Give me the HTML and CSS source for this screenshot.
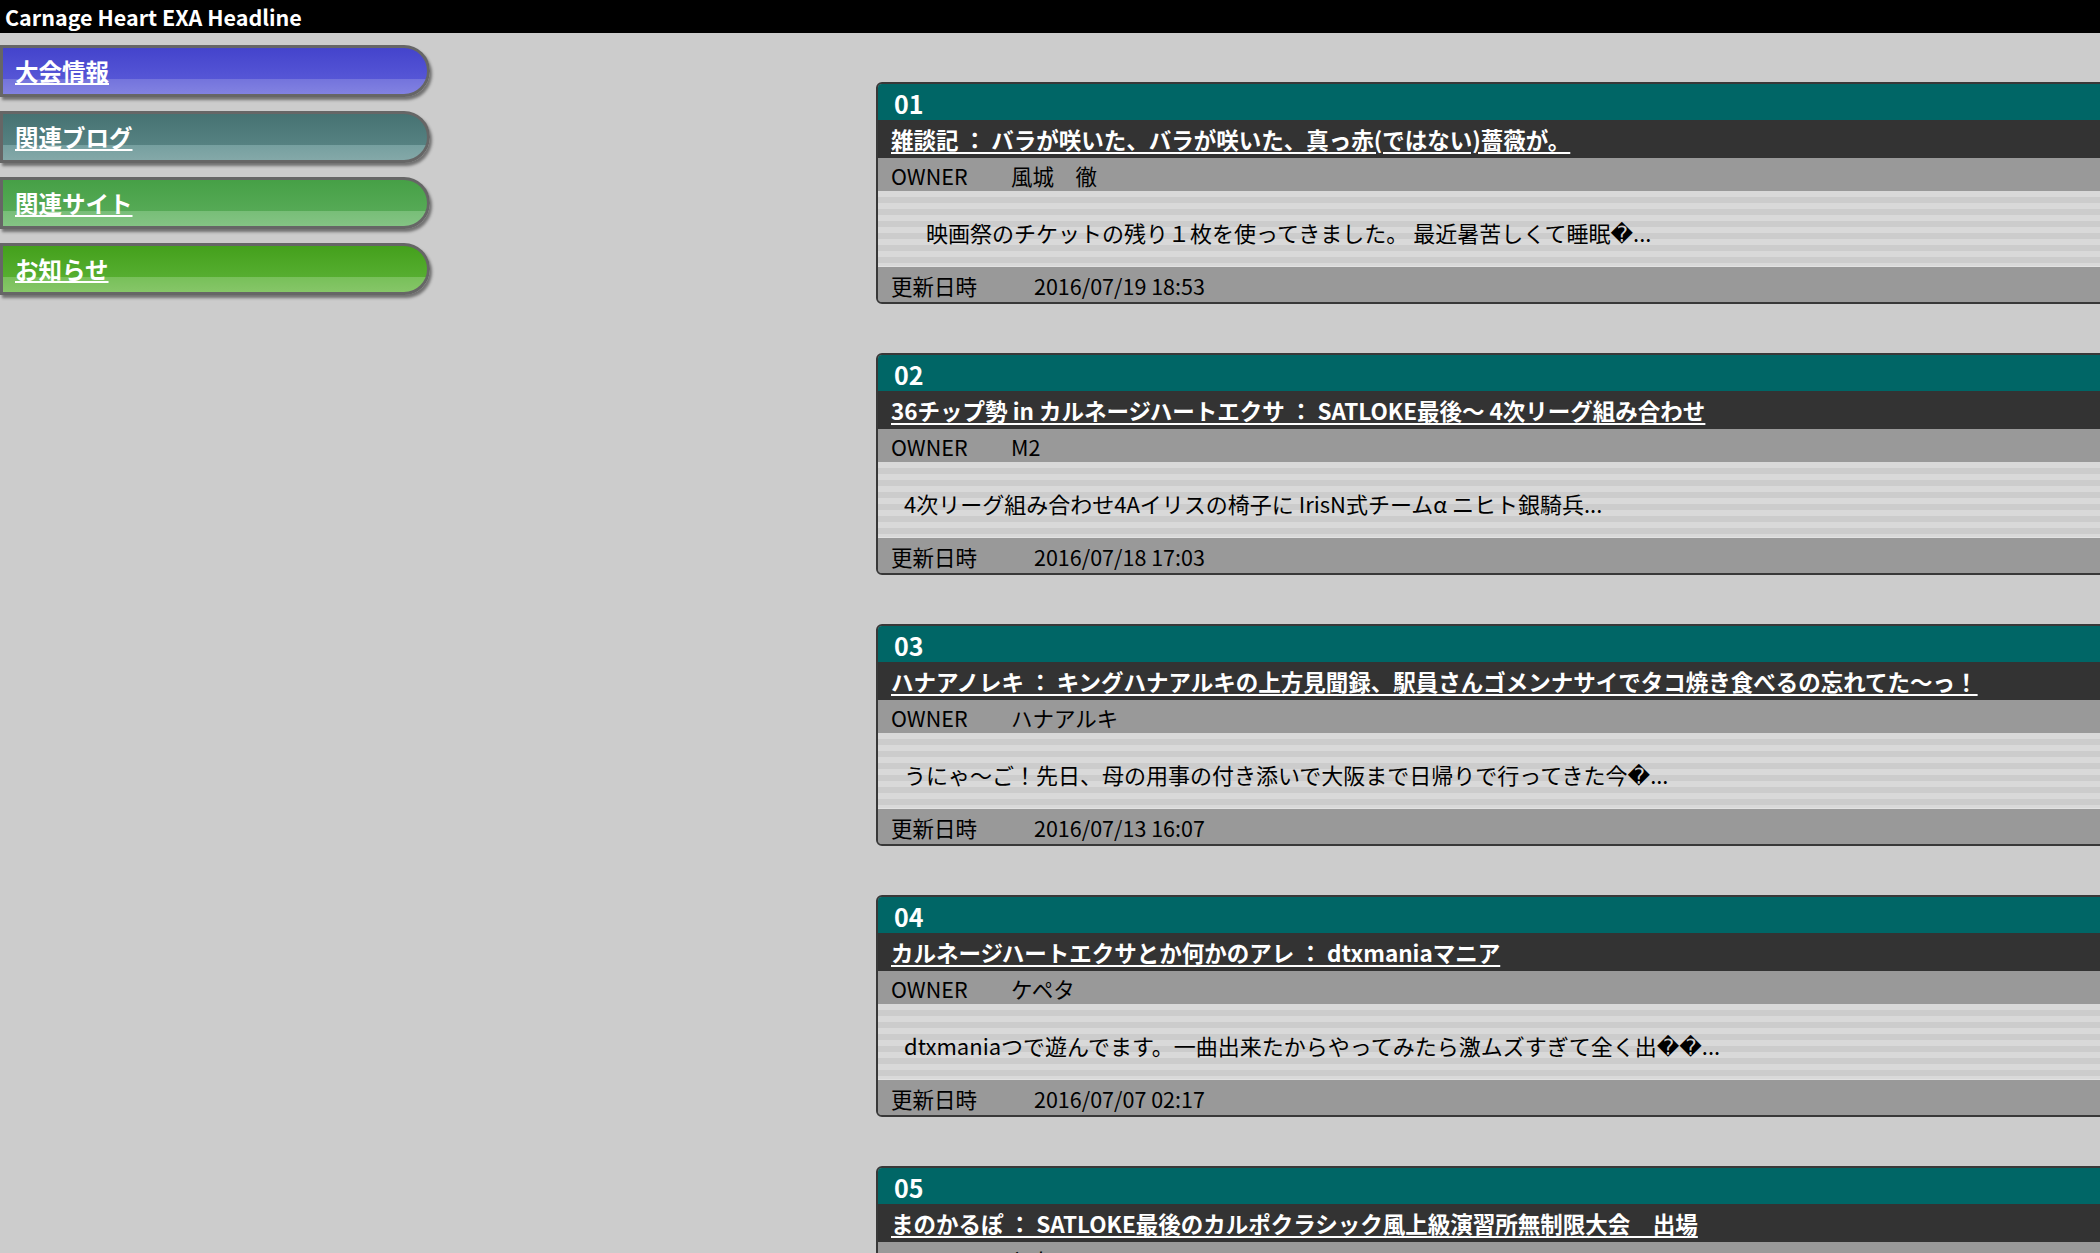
FILE: index.html
```html
<!DOCTYPE html>
<html lang="ja">
<head>
<meta charset="utf-8">
<title>Carnage Heart EXA Headline</title>
<link rel="stylesheet" href="styles.css">
</head>
<body>
<header class="topbar">Carnage Heart EXA Headline</header>
<div class="layout">
  <nav class="nav">
    <a class="navbtn nb-blue" href="#">大会情報</a>
    <a class="navbtn nb-teal" href="#">関連ブログ</a>
    <a class="navbtn nb-green" href="#">関連サイト</a>
    <a class="navbtn nb-lime" href="#">お知らせ</a>
  </nav>
  <main class="main">
    <section class="card">
      <div class="num">01</div>
      <div class="title"><a href="#">雑談記 ： バラが咲いた、バラが咲いた、真っ赤(ではない)薔薇が。</a></div>
      <div class="owner"><span class="olabel">OWNER</span><span>風城　徹</span></div>
      <div class="desc">　映画祭のチケットの残り１枚を使ってきました。 最近暑苦しくて睡眠�...</div>
      <div class="foot"><span class="flabel">更新日時</span><span>2016/07/19 18:53</span></div>
    </section>
    <section class="card">
      <div class="num">02</div>
      <div class="title"><a href="#">36チップ勢 in カルネージハートエクサ ： SATLOKE最後～ 4次リーグ組み合わせ</a></div>
      <div class="owner"><span class="olabel">OWNER</span><span>M2</span></div>
      <div class="desc">4次リーグ組み合わせ4Aイリスの椅子に IrisN式チームα ニヒト銀騎兵...</div>
      <div class="foot"><span class="flabel">更新日時</span><span>2016/07/18 17:03</span></div>
    </section>
    <section class="card">
      <div class="num">03</div>
      <div class="title"><a href="#">ハナアノレキ ： キングハナアルキの上方見聞録、駅員さんゴメンナサイでタコ焼き食べるの忘れてた～っ！</a></div>
      <div class="owner"><span class="olabel">OWNER</span><span>ハナアルキ</span></div>
      <div class="desc">うにゃ～ご！先日、母の用事の付き添いで大阪まで日帰りで行ってきた今�...</div>
      <div class="foot"><span class="flabel">更新日時</span><span>2016/07/13 16:07</span></div>
    </section>
    <section class="card">
      <div class="num">04</div>
      <div class="title"><a href="#">カルネージハートエクサとか何かのアレ ： dtxmaniaマニア</a></div>
      <div class="owner"><span class="olabel">OWNER</span><span>ケペタ</span></div>
      <div class="desc">dtxmaniaつで遊んでます。一曲出来たからやってみたら激ムズすぎて全く出��...</div>
      <div class="foot"><span class="flabel">更新日時</span><span>2016/07/07 02:17</span></div>
    </section>
    <section class="card">
      <div class="num">05</div>
      <div class="title"><a href="#">まのかるぽ ： SATLOKE最後のカルポクラシック風上級演習所無制限大会　出場</a></div>
      <div class="owner"><span class="olabel">OWNER</span><span>とも</span></div>
      <div class="desc">&nbsp;</div>
      <div class="foot"><span class="flabel">更新日時</span><span></span></div>
    </section>
  </main>
</div>
</body>
</html>
```

FILE: styles.css
```css
html {
  overflow: hidden;
}
body {
  margin: 0;
  background: #cccccc;
  font-family: "Noto Sans CJK JP", "DejaVu Sans", sans-serif;
  color: #000;
}
.topbar {
  background: #000;
  color: #fff;
  height: 33px;
  line-height: 33px;
  font-size: 21.5px;
  font-weight: bold;
  padding-left: 5px;
  white-space: nowrap;
}
.layout {
  display: flex;
  align-items: flex-start;
}
.nav {
  flex: 0 0 430px;
  display: flex;
  flex-direction: column;
  gap: 14px;
  padding-top: 12px;
}
.navbtn {
  display: flex;
  align-items: center;
  box-sizing: border-box;
  height: 52px;
  border: 3px solid #666666;
  border-radius: 0 27px 27px 0;
  box-shadow: 2px 3px 3px rgba(0, 0, 0, 0.45);
  padding-left: 12px;
  padding-top: 2px;
  color: #fff;
  font-size: 23.5px;
  font-weight: bold;
  text-decoration: underline;
  text-underline-offset: 2px;
  line-height: 1;
}
.nb-blue {
  background: linear-gradient(to bottom, #4444cc 0%, #5656d6 68%, #7474dc 68%, #8282e2 100%);
}
.nb-teal {
  background: linear-gradient(to bottom, #467272 0%, #568282 68%, #76a0a0 68%, #84a8a8 100%);
}
.nb-green {
  background: linear-gradient(to bottom, #46a046 0%, #56aa56 68%, #78be78 68%, #84c484 100%);
}
.nb-lime {
  background: linear-gradient(to bottom, #44a01c 0%, #56ae30 68%, #78c05a 68%, #86c668 100%);
}
.main {
  flex: 0 0 auto;
  padding-left: 446px;
  padding-top: 49px;
  display: flex;
  flex-direction: column;
  gap: 49px;
}
.card {
  width: 1400px;
  border: 2px solid #383838;
  border-radius: 6px;
  overflow: hidden;
  background: #999999;
}
.num {
  background: #006666;
  color: #fff;
  height: 36px;
  line-height: 39px;
  font-size: 25px;
  font-weight: bold;
  padding-left: 16px;
}
.title {
  background: #333333;
  height: 38px;
  line-height: 38px;
  padding-left: 13px;
  font-size: 22.5px;
  font-weight: bold;
  white-space: nowrap;
}
.title a {
  color: #fff;
  text-decoration: underline;
  text-underline-offset: 3px;
}
.owner,
.foot {
  background: #999999;
  height: 33px;
  line-height: 35px;
  padding-left: 13px;
  font-size: 21.5px;
  white-space: nowrap;
}
.foot {
  height: 35px;
  line-height: 37px;
}
.olabel {
  display: inline-block;
  width: 120px;
}
.flabel {
  display: inline-block;
  width: 143px;
}
.desc {
  height: 75px;
  line-height: 82px;
  padding-left: 26px;
  font-size: 22px;
  white-space: nowrap;
  background: repeating-linear-gradient(to bottom, #d9d9d9 0px, #d9d9d9 6px, #cccccc 6px, #cccccc 12px);
  border-bottom: 1px solid #e2e2e2;
}
```
